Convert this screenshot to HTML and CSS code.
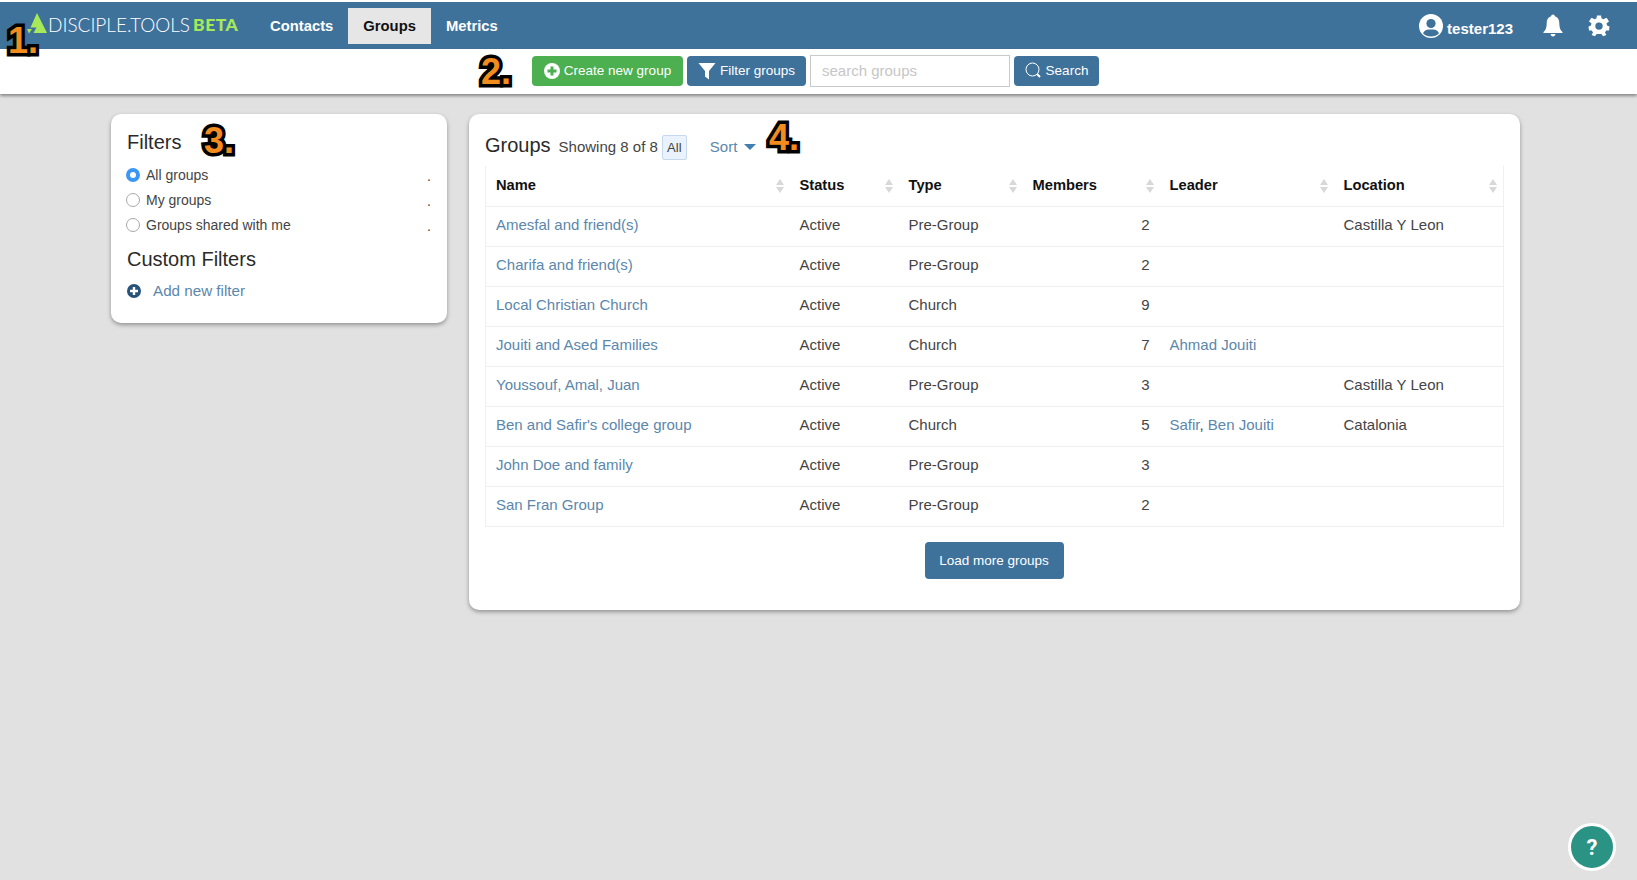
FILE: index.html
```html
<!DOCTYPE html>
<html lang="en">
<head>
  <meta charset="UTF-8">
  <title>Groups</title>
  <link rel="stylesheet" href="styles.css">
</head>
<body>
  <header class="top-bar">
    <a class="logo">
      <svg class="logo-mark" width="22" height="22" viewBox="0 0 22 22">
        <path d="M11 1 L21 21 H7.5 L10.5 15.5 H4.5 Z" fill="#a6ea5a"/>
        <path d="M1 17 H6 L3 21.5 Z" fill="#a6ea5a"/>
      </svg>
      <span class="logo-text">DISCIPLE.TOOLS</span><span class="logo-beta">BETA</span>
    </a>
    <nav class="main-nav">
      <a class="nav-item">Contacts</a>
      <a class="nav-item active">Groups</a>
      <a class="nav-item">Metrics</a>
    </nav>
    <div class="user-nav">
      <svg class="avatar" width="24" height="24" viewBox="0 0 24 24">
        <circle cx="12" cy="12" r="12" fill="#fff"/>
        <circle cx="12" cy="9.5" r="4.6" fill="#3f729b"/>
        <path d="M4 19.2 C5.5 15.8 8.5 15.4 12 15.4 C15.5 15.4 18.5 15.8 20 19.2 C18 21.3 15.2 22.4 12 22.4 C8.8 22.4 6 21.3 4 19.2 Z" fill="#3f729b"/>
      </svg>
      <span class="user-name">tester123</span>
      <svg class="bell" width="20" height="23" viewBox="0 0 20 23">
        <path d="M10 0.5 C11 0.5 11.8 1.3 11.8 2.3 C15 3.2 16.3 5.8 16.3 9 C16.3 13.5 17.2 16 19.5 18 V19 H0.5 V18 C2.8 16 3.7 13.5 3.7 9 C3.7 5.8 5 3.2 8.2 2.3 C8.2 1.3 9 0.5 10 0.5 Z" fill="#fff"/>
        <path d="M7.5 20 H12.5 C12.3 21.5 11.3 22.5 10 22.5 C8.7 22.5 7.7 21.5 7.5 20 Z" fill="#fff"/>
      </svg>
      <svg class="gear" width="22" height="22" viewBox="0 0 22 22">
        <path fill="#fff" fill-rule="evenodd" d="M9 0.5 H13 L13.6 3.4 L15.7 4.3 L18.2 2.7 L19.3 3.8 L19.3 3.8 L21 6.6 L18.6 8.3 L19 10.5 L21.5 11.5 V11.5 L21 15.4 L18.2 15.5 L17 17.5 L18.4 20 L15 21.2 L13.4 19 H11 H8.6 L7 21.2 L3.6 20 L5 17.5 L3.8 15.5 L1 15.4 L0.5 11.5 L3 10.5 L3.4 8.3 L1 6.6 L2.7 3.8 L3.8 2.7 L6.3 4.3 L8.4 3.4 Z M11 7.4 A3.7 3.7 0 1 0 11 14.8 A3.7 3.7 0 1 0 11 7.4 Z"/>
      </svg>
    </div>
  </header>

  <div class="sub-bar">
    <button class="btn btn-green">
      <svg width="16" height="16" viewBox="0 0 16 16">
        <circle cx="8" cy="8" r="8" fill="#fff"/>
        <path d="M6.5 3.5 H9.5 V6.5 H12.5 V9.5 H9.5 V12.5 H6.5 V9.5 H3.5 V6.5 H6.5 Z" fill="#4caf50"/>
      </svg>
      Create new group
    </button>
    <button class="btn btn-blue btn-filter">
      <svg width="18" height="18" viewBox="0 0 18 18">
        <path d="M0.5 1 H17.5 L11 9 V17.5 L7 14.5 V9 Z" fill="#fff"/>
      </svg>
      Filter groups
    </button>
    <input class="search-input" type="text" placeholder="search groups">
    <button class="btn btn-blue btn-search">
      <svg width="17" height="17" viewBox="0 0 17 17" fill="none">
        <circle cx="7.5" cy="7.5" r="6.5" stroke="#fff" stroke-width="1"/>
        <path d="M12.3 12.3 L15 15" stroke="#fff" stroke-width="2"/>
      </svg>
      Search
    </button>
  </div>

  <main class="content">
    <aside class="card filters-card">
      <h3 class="card-title">Filters</h3>
      <ul class="filter-list">
        <li><span class="radio checked"></span><span class="filter-label">All groups</span><span class="filter-count">.</span></li>
        <li><span class="radio"></span><span class="filter-label">My groups</span><span class="filter-count">.</span></li>
        <li><span class="radio"></span><span class="filter-label">Groups shared with me</span><span class="filter-count">.</span></li>
      </ul>
      <h3 class="card-title custom-title">Custom Filters</h3>
      <a class="add-filter">
        <svg width="14" height="14" viewBox="0 0 14 14">
          <circle cx="7" cy="7" r="7" fill="#27527a"/>
          <path d="M5.8 3 H8.2 V5.8 H11 V8.2 H8.2 V11 H5.8 V8.2 H3 V5.8 H5.8 Z" fill="#fff"/>
        </svg>
        <span>Add new filter</span>
      </a>
    </aside>

    <section class="card groups-card">
      <div class="groups-head">
        <h3 class="card-title">Groups</h3>
        <span class="showing">Showing 8 of 8</span>
        <span class="all-tag">All</span>
        <a class="sort-link">Sort<span class="caret"></span></a>
      </div>
      <table class="groups-table">
        <colgroup>
          <col class="col-name"><col class="col-status"><col class="col-type">
          <col class="col-members"><col class="col-leader"><col class="col-location">
        </colgroup>
        <thead>
          <tr>
            <th>Name<span class="sort-arrows"></span></th>
            <th>Status<span class="sort-arrows"></span></th>
            <th>Type<span class="sort-arrows"></span></th>
            <th>Members<span class="sort-arrows"></span></th>
            <th>Leader<span class="sort-arrows"></span></th>
            <th>Location<span class="sort-arrows"></span></th>
          </tr>
        </thead>
        <tbody>
          <tr><td><a>Amesfal and friend(s)</a></td><td>Active</td><td>Pre-Group</td><td class="num">2</td><td></td><td>Castilla Y Leon</td></tr>
          <tr><td><a>Charifa and friend(s)</a></td><td>Active</td><td>Pre-Group</td><td class="num">2</td><td></td><td></td></tr>
          <tr><td><a>Local Christian Church</a></td><td>Active</td><td>Church</td><td class="num">9</td><td></td><td></td></tr>
          <tr><td><a>Jouiti and Ased Families</a></td><td>Active</td><td>Church</td><td class="num">7</td><td><a>Ahmad Jouiti</a></td><td></td></tr>
          <tr><td><a>Youssouf, Amal, Juan</a></td><td>Active</td><td>Pre-Group</td><td class="num">3</td><td></td><td>Castilla Y Leon</td></tr>
          <tr><td><a>Ben and Safir's college group</a></td><td>Active</td><td>Church</td><td class="num">5</td><td><a>Safir</a>, <a>Ben Jouiti</a></td><td>Catalonia</td></tr>
          <tr><td><a>John Doe and family</a></td><td>Active</td><td>Pre-Group</td><td class="num">3</td><td></td><td></td></tr>
          <tr><td><a>San Fran Group</a></td><td>Active</td><td>Pre-Group</td><td class="num">2</td><td></td><td></td></tr>
        </tbody>
      </table>
      <div class="load-more">
        <button class="btn btn-load">Load more groups</button>
      </div>
    </section>
  </main>

  <!-- numbered callouts pasted over the screenshot -->
  <span class="callout callout-1">1.</span>
  <span class="callout callout-2">2.</span>
  <span class="callout callout-3">3.</span>
  <span class="callout callout-4">4.</span>

  <button class="help-btn">?</button>
</body>
</html>
```

FILE: styles.css
```css
* {
  box-sizing: border-box;
}
html, body {
  height: 100%;
}
body {
  margin: 0;
  padding-top: 2px;
  background-color: #e1e1e1;
  font-family: "Liberation Sans", Arial, sans-serif;
  font-size: 15px;
  color: #444;
  overflow: hidden;
  position: relative;
  background-image: linear-gradient(#fff, #fff);
  background-size: 100% 2px;
  background-repeat: no-repeat;
}
a {
  color: #5b87ac;
}

/* top bar */
.top-bar {
  display: flex;
  align-items: center;
  height: 47px;
  background-color: #3f729b;
  color: #fff;
}
.logo {
  display: flex;
  align-items: center;
  width: 255px;
  padding-left: 26px;
  padding-bottom: 3px;
}
.logo-mark {
  margin-top: -3px;
}
.logo-text {
  font-family: Lato, sans-serif;
  font-weight: 300;
  font-size: 19px;
  color: #fff;
  margin-right: 3px;
}
.logo-beta {
  font-family: Lato, sans-serif;
  font-weight: 900;
  font-size: 17.5px;
  letter-spacing: .5px;
  color: #a6ea5a;
}
.main-nav {
  display: flex;
  align-items: center;
}
.nav-item {
  display: block;
  padding: 0 15px;
  height: 36px;
  line-height: 36px;
  color: #fff;
  font-weight: 700;
  font-size: 14.8px;
}
.nav-item.active {
  background-color: #e6e6e6;
  color: #111;
}
.user-nav {
  display: flex;
  align-items: center;
  margin-left: auto;
  padding-right: 27px;
}
.user-name {
  font-weight: 700;
  font-size: 15px;
  margin-left: 4px;
  margin-top: 6px;
  margin-right: 30px;
}
.gear {
  margin-left: 25px;
}

/* action bar */
.sub-bar {
  display: flex;
  align-items: center;
  justify-content: center;
  gap: 4px;
  height: 45px;
  padding-right: 6px;
  padding-bottom: 2px;
  background-color: #fff;
  box-shadow: 0 2px 3px rgba(0, 0, 0, .4);
  position: relative;
}
.btn {
  display: inline-flex;
  align-items: center;
  justify-content: center;
  gap: 4px;
  height: 30px;
  padding: 0 11px;
  border: none;
  border-radius: 4px;
  color: #fff;
  font-family: "Liberation Sans", Arial, sans-serif;
  font-size: 13.5px;
}
.btn-green {
  background-color: #4caf50;
  width: 151px;
  padding: 0;
}
.btn-blue {
  background-color: #3f729b;
  padding: 0;
}
.btn-filter {
  width: 119px;
}
.btn-search {
  width: 85px;
}
.search-input {
  width: 200px;
  height: 32px;
  padding: 0 11px;
  border: 1px solid #cacaca;
  background-color: #fff;
  font-family: "Liberation Sans", Arial, sans-serif;
  font-size: 15px;
}
.search-input::placeholder {
  color: #c6c6c6;
}

/* cards */
.content {
  display: grid;
  grid-template-columns: 336px 1051px;
  gap: 22px;
  align-items: start;
  padding: 20px 0 0 111px;
}
.card {
  background-color: #fff;
  border-radius: 10px;
  box-shadow: 0 2px 4px rgba(0, 0, 0, .35);
}
.card-title {
  margin: 0;
  font-weight: 400;
  font-size: 20px;
  color: #2a2a2a;
}
.filters-card {
  height: 209px;
  padding: 17px 16px 0 16px;
}
.filter-list {
  list-style: none;
  margin: 8px 0 0 -1px;
  padding: 0;
}
.filter-list li {
  display: flex;
  align-items: center;
  height: 25px;
  font-size: 14px;
}
.radio {
  width: 14px;
  height: 14px;
  margin-right: 6px;
  border: 1px solid #a8a8a8;
  border-radius: 50%;
  background-color: #fff;
}
.radio.checked {
  border: 4.5px solid #3c96f4;
}
.filter-label {
  flex: 1;
}
.filter-count {
  width: 4px;
  margin-top: 2px;
}
.custom-title {
  margin-top: 11px;
}
.add-filter {
  display: flex;
  align-items: center;
  gap: 12px;
  margin-top: 11px;
  font-size: 15.2px;
}

/* groups table */
.groups-card {
  height: 496px;
  padding: 17px 17px 0 16px;
}
.groups-head {
  display: flex;
  align-items: center;
  height: 30px;
  margin-bottom: 5px;
}
.groups-head .card-title {
  margin-bottom: 2px;
}
.showing {
  margin-left: 8px;
  margin-top: 1px;
  font-size: 15px;
}
.all-tag {
  display: block;
  width: 25px;
  height: 25px;
  line-height: 24px;
  margin-left: 4px;
  margin-top: 2px;
  text-align: center;
  font-size: 13px;
  background-color: #eaf3fb;
  border: 1px solid #c4d9ef;
  border-radius: 2px;
}
.sort-link {
  display: flex;
  align-items: center;
  margin-left: 23px;
}
.caret {
  width: 0;
  height: 0;
  margin-left: 7px;
  margin-top: 2px;
  border-left: 6px solid transparent;
  border-right: 6px solid transparent;
  border-top: 6px solid #3f7fb1;
}
.groups-table {
  width: 1018px;
  table-layout: fixed;
  border-collapse: collapse;
  border: 1px solid #f0f0f0;
  border-top: none;
}
.col-name { width: 304px; }
.col-status { width: 109px; }
.col-type { width: 124px; }
.col-members { width: 137px; }
.col-leader { width: 174px; }
.col-location { width: 170px; }
.groups-table th,
.groups-table td {
  height: 40px;
  padding: 0 10px 4px;
  text-align: left;
  border-bottom: 1px solid #efefef;
  white-space: nowrap;
}
.groups-table th {
  position: relative;
  padding-bottom: 2px;
  font-size: 14.7px;
  color: #111;
}
.groups-table td.num {
  text-align: right;
  padding-right: 10px;
}
.sort-arrows {
  position: absolute;
  right: 6px;
  top: 13px;
  width: 8px;
  height: 14px;
}
.sort-arrows::before,
.sort-arrows::after {
  content: "";
  position: absolute;
  left: 0;
  border-left: 4px solid transparent;
  border-right: 4px solid transparent;
}
.sort-arrows::before {
  top: 0;
  border-bottom: 6px solid #d8d8d8;
}
.sort-arrows::after {
  bottom: 0;
  border-top: 6px solid #d8d8d8;
}
.load-more {
  display: flex;
  justify-content: center;
  margin-top: 15px;
}
.btn-load {
  width: 139px;
  height: 37px;
  padding: 0;
  background-color: #3f729b;
}

/* help */
.help-btn {
  position: absolute;
  left: 1568px;
  top: 823px;
  width: 48px;
  height: 48px;
  border: 3px solid #fff;
  border-radius: 50%;
  background-color: #2a9384;
  color: #fff;
  font-family: Roboto, sans-serif;
  font-weight: 700;
  font-size: 22px;
}

/* callouts */
.callout {
  position: absolute;
  font-family: "Liberation Sans", Arial, sans-serif;
  font-weight: 700;
  font-size: 36px;
  line-height: 1;
  color: #f28c1e;
  -webkit-text-stroke: 7px #000;
  paint-order: stroke fill;
  text-shadow: 0 1px 2px rgba(0, 0, 0, .5);
}
.callout-1 { left: 8px; top: 23px; }
.callout-2 { left: 481px; top: 54px; }
.callout-3 { left: 204px; top: 123px; }
.callout-4 { left: 769px; top: 120px; }
```
